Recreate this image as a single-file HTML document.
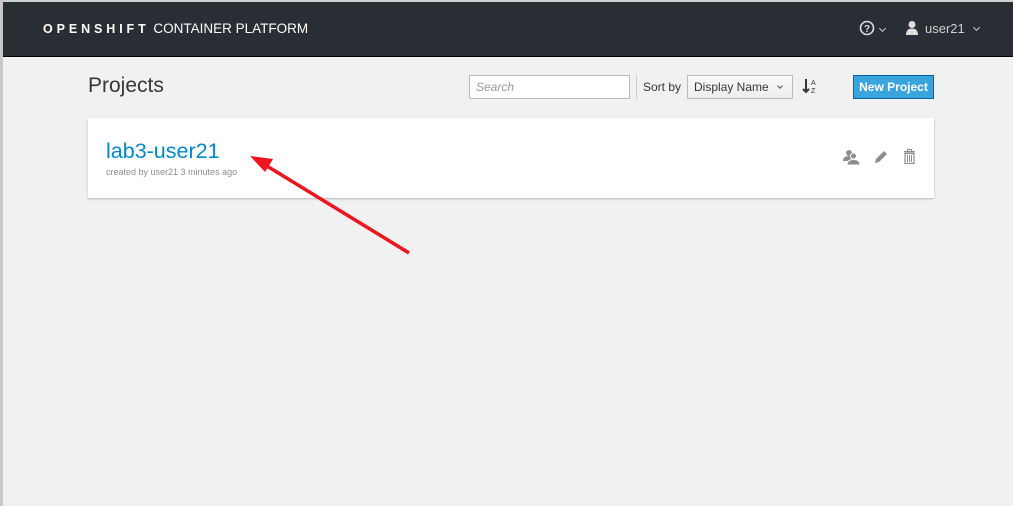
<!DOCTYPE html>
<html><head><style>
body{margin:0;width:1013px;height:506px;overflow:hidden;background:#f1f1f1;font-family:"Liberation Sans",sans-serif;position:relative}
.l{position:absolute;left:0;top:0;width:3px;height:506px;background:#c8c8c8}
.top{position:absolute;left:0;top:0;width:1013px;height:2px;background:#d0d0d0}
.nav{position:absolute;left:3px;top:2px;width:1010px;height:54px;background:#292e34;border-bottom:1px solid #030303}
.brand{position:absolute;left:40px;top:19px;color:#fff;font-size:13.5px;letter-spacing:0}
.brand b{letter-spacing:3.9px;font-weight:bold;font-size:12.5px}
.nr{position:absolute;color:#d1d1d1;font-size:13px;top:19px}
h1{position:absolute;left:88px;top:74px;margin:0;font-weight:normal;font-size:21px;color:#363636}
.search{position:absolute;left:469px;top:75px;border:1px solid #bbb;background:#fff;font-style:italic;color:#999;font-size:12px;line-height:22px;padding-left:6px;box-sizing:border-box;width:161px;height:24px}
.sep{position:absolute;left:636px;top:75px;width:1px;height:24px;background:#ccc}
.sb{position:absolute;left:643px;top:80px;font-size:12px;color:#363636}
.dd{position:absolute;left:687px;top:75px;width:106px;height:24px;border:1px solid #bbb;background:linear-gradient(#fafafa,#ededed);box-sizing:border-box;font-size:12px;color:#363636;line-height:22px;padding-left:6px}
.az{position:absolute;left:802px;top:77px;font-size:14px;color:#333}
.btn{position:absolute;left:853px;top:75px;width:81px;height:24px;background:#39a5dc;border:1px solid #00659c;box-sizing:border-box;color:#fff;font-weight:bold;font-size:12px;line-height:22px;text-align:center}
.card{position:absolute;left:88px;top:118px;width:846px;height:80px;background:#fff;box-shadow:0 1px 2px rgba(0,0,0,.25)}
.pn{position:absolute;left:18px;top:21px;font-size:21.5px;color:#0088ce}
.cb{position:absolute;left:18px;top:49px;font-size:9px;color:#8b8d8f}
.chev{display:inline-block;width:4px;height:4px;border-right:1.3px solid #ccc;border-bottom:1.3px solid #ccc;transform:rotate(45deg);vertical-align:3px}
</style></head><body>
<div class="top"></div>
<div class="nav">
<div class="brand"><b>OPENSHIFT</b> CONTAINER PLATFORM</div>
<div class="nr" style="left:856px;top:18px"><svg width="16" height="16" viewBox="0 0 16 16"><circle cx="8" cy="8" r="6.5" fill="none" stroke="#ddd" stroke-width="1.6"/><text x="8" y="12" text-anchor="middle" font-size="10" font-weight="bold" fill="#ddd" font-family="Liberation Sans">?</text></svg></div>
<div class="nr" style="left:877px;top:20px"><span class="chev"></span></div>
<div class="nr" style="left:902px;top:18px"><svg width="14" height="15" viewBox="0 0 14 15"><circle cx="7" cy="4.5" r="3.5" fill="#ddd"/><path d="M1 15 Q1 8.5 7 8.5 Q13 8.5 13 15Z" fill="#ddd"/></svg></div>
<div class="nr" style="left:922px;top:19px">user21 <span class="chev" style="margin-left:6px"></span></div>
</div>
<div class="l"></div>
<h1>Projects</h1>
<div class="search">Search</div>
<div class="sep"></div>
<div class="sb">Sort by</div>
<div class="dd">Display Name <span class="chev" style="margin-left:6px;border-color:#555;width:3px;height:3px"></span></div>
<div class="az"><svg width="16" height="18" viewBox="0 0 16 18"><path d="M4 2V15M1 12L4 15 7 12" stroke="#333" stroke-width="2" fill="none"/><text x="9" y="8" font-size="7" fill="#333" font-family="Liberation Sans">A</text><text x="9" y="16" font-size="7" fill="#333" font-family="Liberation Sans">Z</text></svg></div>
<div class="btn">New Project</div>
<div class="card">
<div class="pn">lab3-user21</div>
<div class="cb">created by user21 3 minutes ago</div>
<svg style="position:absolute;left:755px;top:31px" width="18" height="16" viewBox="0 0 18 16"><circle cx="6" cy="4" r="3" fill="#8b8d8f"/><path d="M0 12Q0 7 6 7 10 7 11 10V12Z" fill="#8b8d8f"/><circle cx="10.5" cy="7" r="3" fill="#8b8d8f" stroke="#fff" stroke-width="1"/><path d="M4 16Q4 10.5 10.5 10.5 17 10.5 17 16Z" fill="#8b8d8f" stroke="#fff" stroke-width="1"/></svg>
<svg style="position:absolute;left:786px;top:31px" width="15" height="15" viewBox="0 0 15 15"><path d="M2 10L10 2 13 5 5 13 1 14Z" fill="#8b8d8f"/><path d="M11 1L14 4" stroke="#fff" stroke-width="1"/></svg>
<svg style="position:absolute;left:815px;top:31px" width="13" height="15" viewBox="0 0 13 15"><rect x="1" y="2" width="11" height="1.5" fill="#8b8d8f"/><rect x="4.5" y="0.5" width="4" height="2" fill="none" stroke="#8b8d8f"/><path d="M2 4.5H11V14.5H2Z" fill="none" stroke="#8b8d8f" stroke-width="1.2"/><path d="M4.5 6V13M6.5 6V13M8.5 6V13" stroke="#8b8d8f"/></svg>
</div>
<svg style="position:absolute;left:0;top:0" width="1013" height="506"><path d="M409 253L262 163" stroke="#f0141e" stroke-width="3.5" fill="none"/><path d="M250 156L273 159 265 172Z" fill="#f0141e"/></svg>
</body></html>
